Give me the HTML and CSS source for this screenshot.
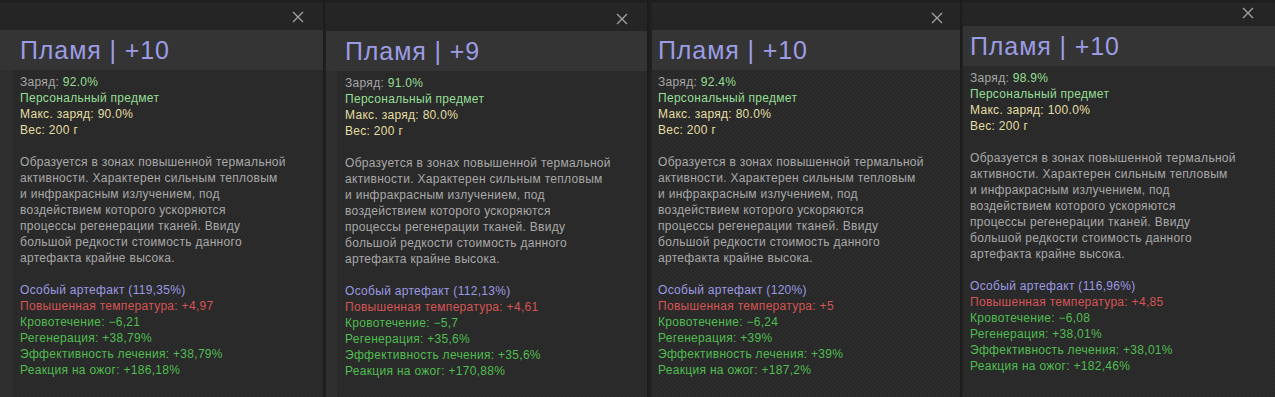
FILE: index.html
```html
<!DOCTYPE html>
<html lang="ru">
<head>
<meta charset="utf-8">
<title>Пламя</title>
<link rel="stylesheet" href="styles.css">
</head>
<body>
<div class="strip">
  <section class="panel p1">
    <div class="top"><svg class="close" viewBox="0 0 12 12"><path d="M1 1L11 11M11 1L1 11"/></svg></div>
    <div class="head"><h1 class="title">Пламя | +10</h1></div>
    <div class="body">
      <div class="info">
        <p><span class="grey">Заряд: </span><span class="lgreen">92.0%</span></p>
        <p class="lgreen">Персональный предмет</p>
        <p class="yellow">Макс. заряд: 90.0%</p>
        <p class="yellow">Вес: 200 г</p>
      </div>
      <p class="desc">Образуется в зонах повышенной термальной<br>активности. Характерен сильным тепловым<br>и инфракрасным излучением, под<br>воздействием которого ускоряются<br>процессы регенерации тканей. Ввиду<br>большой редкости стоимость данного<br>артефакта крайне высока.</p>
      <div class="stats">
        <p class="violet">Особый артефакт (119,35%)</p>
        <p class="red">Повышенная температура: +4,97</p>
        <p class="green">Кровотечение: −6,21</p>
        <p class="green">Регенерация: +38,79%</p>
        <p class="green">Эффективность лечения: +38,79%</p>
        <p class="green">Реакция на ожог: +186,18%</p>
      </div>
    </div>
  </section>
  <div class="sep s3"></div>
  <section class="panel p2">
    <div class="top"><svg class="close" viewBox="0 0 12 12"><path d="M1 1L11 11M11 1L1 11"/></svg></div>
    <div class="head"><h1 class="title">Пламя | +9</h1></div>
    <div class="body">
      <div class="info">
        <p><span class="grey">Заряд: </span><span class="lgreen">91.0%</span></p>
        <p class="lgreen">Персональный предмет</p>
        <p class="yellow">Макс. заряд: 80.0%</p>
        <p class="yellow">Вес: 200 г</p>
      </div>
      <p class="desc">Образуется в зонах повышенной термальной<br>активности. Характерен сильным тепловым<br>и инфракрасным излучением, под<br>воздействием которого ускоряются<br>процессы регенерации тканей. Ввиду<br>большой редкости стоимость данного<br>артефакта крайне высока.</p>
      <div class="stats">
        <p class="violet">Особый артефакт (112,13%)</p>
        <p class="red">Повышенная температура: +4,61</p>
        <p class="green">Кровотечение: −5,7</p>
        <p class="green">Регенерация: +35,6%</p>
        <p class="green">Эффективность лечения: +35,6%</p>
        <p class="green">Реакция на ожог: +170,88%</p>
      </div>
    </div>
  </section>
  <div class="sep s5"></div>
  <section class="panel p3">
    <div class="top"><svg class="close" viewBox="0 0 12 12"><path d="M1 1L11 11M11 1L1 11"/></svg></div>
    <div class="head"><h1 class="title">Пламя | +10</h1></div>
    <div class="body">
      <div class="info">
        <p><span class="grey">Заряд: </span><span class="lgreen">92.4%</span></p>
        <p class="lgreen">Персональный предмет</p>
        <p class="yellow">Макс. заряд: 80.0%</p>
        <p class="yellow">Вес: 200 г</p>
      </div>
      <p class="desc">Образуется в зонах повышенной термальной<br>активности. Характерен сильным тепловым<br>и инфракрасным излучением, под<br>воздействием которого ускоряются<br>процессы регенерации тканей. Ввиду<br>большой редкости стоимость данного<br>артефакта крайне высока.</p>
      <div class="stats">
        <p class="violet">Особый артефакт (120%)</p>
        <p class="red">Повышенная температура: +5</p>
        <p class="green">Кровотечение: −6,24</p>
        <p class="green">Регенерация: +39%</p>
        <p class="green">Эффективность лечения: +39%</p>
        <p class="green">Реакция на ожог: +187,2%</p>
      </div>
    </div>
  </section>
  <div class="sep s3"></div>
  <section class="panel p4">
    <div class="top"><svg class="close" viewBox="0 0 12 12"><path d="M1 1L11 11M11 1L1 11"/></svg></div>
    <div class="head"><h1 class="title">Пламя | +10</h1></div>
    <div class="body">
      <div class="info">
        <p><span class="grey">Заряд: </span><span class="lgreen">98.9%</span></p>
        <p class="lgreen">Персональный предмет</p>
        <p class="yellow">Макс. заряд: 100.0%</p>
        <p class="yellow">Вес: 200 г</p>
      </div>
      <p class="desc">Образуется в зонах повышенной термальной<br>активности. Характерен сильным тепловым<br>и инфракрасным излучением, под<br>воздействием которого ускоряются<br>процессы регенерации тканей. Ввиду<br>большой редкости стоимость данного<br>артефакта крайне высока.</p>
      <div class="stats">
        <p class="violet">Особый артефакт (116,96%)</p>
        <p class="red">Повышенная температура: +4,85</p>
        <p class="green">Кровотечение: −6,08</p>
        <p class="green">Регенерация: +38,01%</p>
        <p class="green">Эффективность лечения: +38,01%</p>
        <p class="green">Реакция на ожог: +182,46%</p>
      </div>
    </div>
  </section>
</div>
</body>
</html>
```

FILE: styles.css
```css
* { box-sizing: border-box; }
html, body {
  margin: 0;
  padding: 0;
  background: #1d1d1d;
  overflow: hidden;
}
body {
  font-family: "Liberation Sans", Arial, sans-serif;
}
p { margin: 0; }

.strip {
  display: flex;
  width: 1275px;
  height: 397px;
  background: #1c1c1c;
}

.sep {
  flex: none;
  height: 100%;
  background: linear-gradient(90deg, #1a1a1a, #232323 100%);
}
.s3 { width: 3px; }
.s5 { width: 5px; }

.panel {
  flex: none;
  height: 100%;
  display: flex;
  flex-direction: column;
  background: #2f2f2f;
  overflow: hidden;
}
.p1 { width: 323px; --top: 30px; --ml: 13px; --pl: 7px; --xr: 19px; --xy: 11px; }
.p2 { width: 321px; --top: 31px; --ml: 11px; --pl: 8px; --xr: 19px; --xy: 13px; }
.p3 { width: 308px; --top: 30px; --ml: 0px; --pl: 6px; --xr: 17px; --xy: 12px; }
.p4 { width: 312px; --top: 26px; --ml: 0px; --pl: 7px; --xr: 21px; --xy: 7px; }

.top {
  flex: none;
  height: var(--top);
  background: linear-gradient(180deg, #1f1f1f 0, #1f1f1f 3px, #262626 3px, #242424 100%);
  display: flex;
  justify-content: flex-end;
  align-items: flex-start;
  padding-right: var(--xr);
  padding-top: var(--xy);
}
.close {
  width: 12px;
  height: 12px;
  fill: none;
  stroke: #a4a4a4;
  stroke-width: 1.3;
}

.head {
  flex: none;
  height: 40px;
  background: #343434;
  display: flex;
  align-items: center;
  padding-left: calc(var(--ml) + var(--pl));
}
.title {
  margin: 0;
  font-family: "Liberation Sans", Arial, sans-serif;
  font-weight: normal;
  font-size: 25px;
  letter-spacing: 0.9px;
  color: #9c9ce4;
  white-space: nowrap;
}

.body {
  flex: 1;
  margin-left: var(--ml);
  padding: 4px 0 0 var(--pl);
  font-size: 12px;
  line-height: 16px;
  letter-spacing: 0.3px;
  white-space: nowrap;
  background:
    repeating-conic-gradient(#2c2c2c 0 25%, #282828 0 50%) 0 0 / 4px 4px;
}
.desc { margin: 16px 0; color: #a8a8a8; }

.grey { color: #a6a6a6; }
.lgreen { color: #95df95; }
.yellow { color: #e4dea2; }
.violet { color: #9a9ae2; }
.red { color: #d65454; }
.green { color: #4fbd4f; }
```
